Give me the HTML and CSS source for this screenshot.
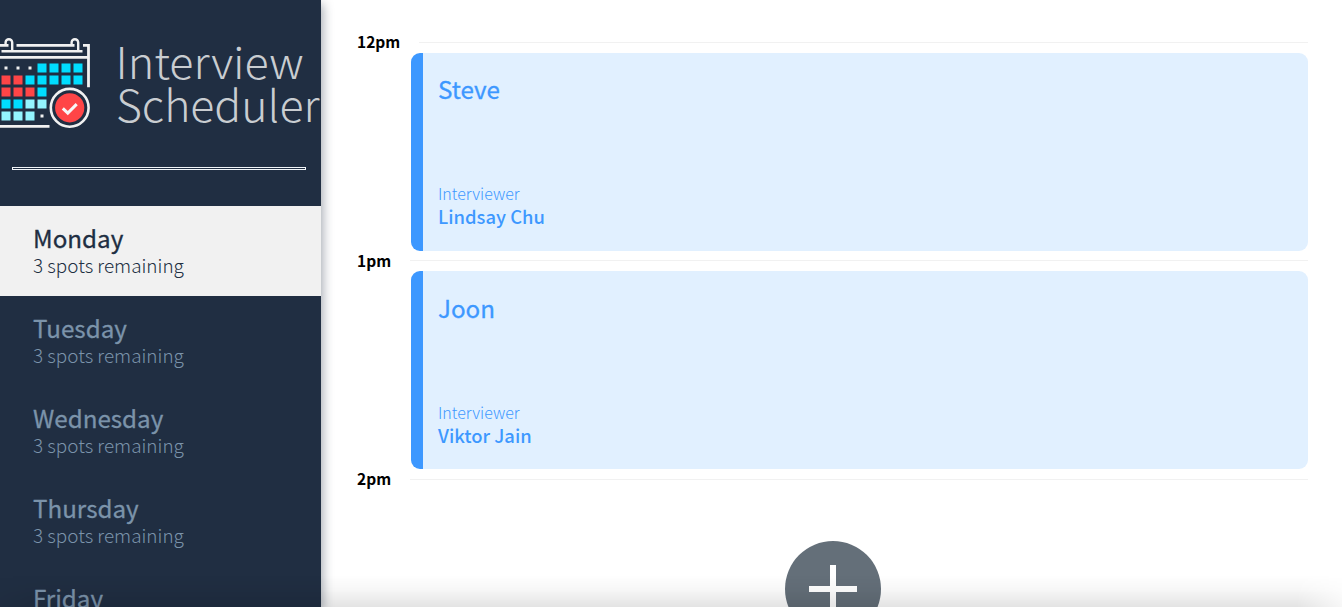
FILE: index.html
```html
<!DOCTYPE html>
<html lang="en">
<head>
<meta charset="utf-8">
<title>Interview Scheduler</title>
<link rel="stylesheet" href="styles.css">
</head>
<body>
<main class="layout">
  <section class="sidebar">
    <svg class="logo" viewBox="0 2 321 110" role="img" aria-label="Interview Scheduler">
      <g fill="none" stroke="#f1f1f1" stroke-width="2.800">
        <path d="M0 20.300H8.500M16.500 20.300H74.500M83 20.300H88.500V62.300"/>
        <path d="M1.500 26.300H12.200V17.500a3.300 3.300 0 0 0-6.600 0V20M12.200 26.300H78.200V17.500a3.300 3.300 0 0 0-6.600 0V20M78.200 26.300H82.500" stroke-width="2.400"/>
        <path d="M0 32.300H88M0 101.300H49.500"/>
      </g>
      <path fill="#f1f1f1" d="M4.500 41.500h3v3h-3zM16.500 41.500h3v3h-3zM28.500 41.500h3v3h-3zM40.500 89.500h3v3h-3z"/>
      <path fill="#00ddff" d="M37.500 38.500h9v9h-9zM49.500 38.500h9v9h-9zM61.500 38.500h9v9h-9zM73.500 38.500h9v9h-9zM25.500 50.500h9v9h-9zM37.500 50.500h9v9h-9zM49.500 50.500h9v9h-9zM61.500 50.500h9v9h-9zM73.500 50.500h9v9h-9zM37.500 62.500h9v9h-9zM1.500 74.500h9v9h-9zM13.500 74.500h9v9h-9z"/>
      <path fill="#ff4547" d="M1.500 50.500h9v9h-9zM13.500 50.500h9v9h-9zM1.500 62.500h9v9h-9zM13.500 62.500h9v9h-9zM25.500 62.500h9v9h-9z"/>
      <path fill="#93f5ff" d="M25.500 74.500h9v9h-9zM37.500 74.500h9v9h-9zM1.500 86.500h9v9h-9zM13.500 86.500h9v9h-9zM25.500 86.500h9v9h-9z"/>
      <circle cx="69.700" cy="82.800" r="18.900" fill="#202e42" stroke="#f1f1f1" stroke-width="2.600"/>
      <circle cx="69.700" cy="82.800" r="14.600" fill="#ff4547"/>
      <path d="M62.800 83.300l5 4.800 8.900-9" fill="none" stroke="#f7f7f7" stroke-width="3"/>
      <text class="logo__text" x="115.500" y="54" textLength="188" lengthAdjust="spacingAndGlyphs">Interview</text>
      <text class="logo__text" x="116" y="97.300" textLength="203.500" lengthAdjust="spacingAndGlyphs">Scheduler</text>
    </svg>
    <hr class="sidebar__separator">
    <nav class="days">
      <div class="day day--selected"><h2 class="day__name">Monday</h2><h3 class="day__spots">3 spots remaining</h3></div>
      <div class="day"><h2 class="day__name">Tuesday</h2><h3 class="day__spots">3 spots remaining</h3></div>
      <div class="day"><h2 class="day__name">Wednesday</h2><h3 class="day__spots">3 spots remaining</h3></div>
      <div class="day"><h2 class="day__name">Thursday</h2><h3 class="day__spots">3 spots remaining</h3></div>
      <div class="day"><h2 class="day__name">Friday</h2></div>
    </nav>
  </section>
  <section class="schedule">
    <article class="appointment">
      <header class="time time--first"><h4 class="time__label">12pm</h4><hr class="time__line"></header>
      <div class="card">
        <h2 class="card__student">Steve</h2>
        <h4 class="card__label">Interviewer</h4>
        <h3 class="card__interviewer">Lindsay Chu</h3>
      </div>
    </article>
    <article class="appointment appointment--second">
      <header class="time"><h4 class="time__label">1pm</h4><hr class="time__line"></header>
      <div class="card">
        <h2 class="card__student">Joon</h2>
        <h4 class="card__label">Interviewer</h4>
        <h3 class="card__interviewer">Viktor Jain</h3>
      </div>
    </article>
    <article class="appointment">
      <header class="time"><h4 class="time__label">2pm</h4><hr class="time__line"></header>
      <div class="add">
        <svg class="add__icon" viewBox="0 0 96 96" role="img" aria-label="Add">
          <circle cx="48" cy="48" r="48" fill="#646f79"/>
          <path d="M48 24v48M24 48h48" stroke="#fff" stroke-width="6"/>
        </svg>
      </div>
    </article>
  </section>
</main>
<div class="shade"></div>
</body>
</html>
```

FILE: styles.css
```css
* { box-sizing: border-box; }
body {
  margin: 0;
  height: 607px;
  overflow: hidden;
  background: #fff;
  font-family: "Noto Sans CJK SC", "Open Sans", sans-serif;
}
h2, h3, h4, hr { margin: 0; }
.layout { display: flex; height: 607px; overflow: hidden; }
.sidebar {
  flex: 0 0 321px;
  height: 607px;
  overflow: hidden;
  padding-top: 27px;
  background: #202e42;
  box-shadow: 2px 4px 10px rgba(32, 46, 66, 0.4);
  z-index: 1;
}
.logo { display: block; width: 321px; height: 110px; }
.logo__text { font-size: 43.5px; font-weight: 300; fill: #c9cdd1; }
.sidebar__separator {
  height: 3px;
  margin: 30px 15px 36px 12px;
  border: 1px solid #f1f5f9;
}
.day { height: 90px; padding: 18px 33px 0; color: #7b93aa; }
.day--selected { background: #f1f1f1; color: #202e42; }
.day__name, .card__student {
  font-size: 24.2px;
  line-height: 27px;
  font-weight: 400;
  -webkit-text-stroke: 0.3px currentColor;
}
.day__spots { margin-top: 2px; font-size: 18.9px; line-height: 24px; font-weight: 300; }
.schedule { flex: 1; padding: 32px 34px 0 36px; }
.appointment { height: 218.4px; }
.time { display: flex; align-items: center; height: 21px; }
.time__label { width: 53px; margin-bottom: 3px; font-size: 15.5px; line-height: 20px; font-weight: 700; }
.time__line { flex: 1; height: 1px; border: 0; background: #f1f1f1; }
.time--first .time__label { width: 62px; margin-bottom: 4px; }
.appointment--second .time__label { margin-bottom: 2px; }
.card {
  height: 198px;
  margin-left: 54px;
  padding: 22px 15px 0;
  border-left: 12px solid #3d98ff;
  border-radius: 9px;
  background: #e1f0ff;
  color: #3d98ff;
}
.appointment--second .card { padding-top: 23px; }
.card__student { height: 108px; }
.card__label { font-size: 16px; line-height: 20px; font-weight: 300; }
.card__interviewer { margin-top: 1px; font-size: 18.4px; line-height: 24px; font-weight: 500; }
.add { display: flex; justify-content: center; padding-top: 51px; }
.add__icon { width: 96px; height: 96px; }
.shade {
  position: fixed;
  z-index: 2;
  inset: auto 0 0 0;
  height: 32px;
  background: linear-gradient(transparent, rgba(0, 0, 0, 0.03) 45%, rgba(0, 0, 0, 0.11));
  -webkit-mask-image: linear-gradient(to right, rgba(0, 0, 0, 0.3), #000 45px, #000 calc(100% - 45px), rgba(0, 0, 0, 0.3));
}
```
